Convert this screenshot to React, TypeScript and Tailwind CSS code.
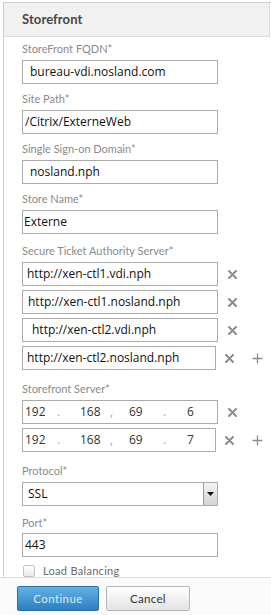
import React from 'react';

const labelCls = "h-[14px] leading-[14px] text-[11px] text-[#8a8a8a] font-['Lato',sans-serif]";
const inputCls = "w-[196px] h-[24px] border border-[#ababab] bg-white flex items-center text-[12px] text-[#111] font-['Open_Sans',sans-serif] whitespace-nowrap";

const RemoveIcon = () => (
  <div className="w-[28px] h-[24px] flex items-center justify-center">
    <svg width="9" height="9" viewBox="0 0 9 9">
      <path d="M1 1 L8 8 M8 1 L1 8" stroke="#8c8c8c" strokeWidth="2" strokeLinecap="round" />
    </svg>
  </div>
);

const AddIcon = () => (
  <div className="w-[28px] h-[24px] flex items-center justify-center">
    <svg width="11" height="11" viewBox="0 0 11 11">
      <path d="M5.5 0.5 V10.5 M0.5 5.5 H10.5" stroke="#8c8c8c" strokeWidth="1.3" />
    </svg>
  </div>
);

const TextField = ({ label, value, pad, className = '' }: { label: string; value: string; pad: string; className?: string }) => (
  <div className={className}>
    <div className={labelCls}>{label}</div>
    <div className={`mt-[4px] ${inputCls} ${pad}`}>{value}</div>
  </div>
);

const staServers = [
  { v: 'http://xen-ctl1.vdi.nph', pad: 'pl-[4px]' },
  { v: 'http://xen-ctl1.nosland.nph', pad: 'pl-[5px]' },
  { v: 'http://xen-ctl2.vdi.nph', pad: 'pl-[9px]' },
  { v: 'http://xen-ctl2.nosland.nph', pad: 'pl-[4px]' },
];

const IpField = ({ last }: { last: string }) => (
  <div className={`${inputCls} pl-[2px] text-[#333]`}>
    <span className="w-[32px]">192</span>
    <span className="w-[23px] text-[#aaa]">.</span>
    <span className="w-[30px]">168</span>
    <span className="w-[19px] text-[#aaa]">,</span>
    <span className="w-[34px]">69</span>
    <span className="w-[24px] text-[#aaa]">.</span>
    <span>{last}</span>
  </div>
);

export default function App() {
  return (
    <div className="w-[271px] h-[615px] bg-white overflow-hidden font-['Lato',sans-serif]">
      <div className="ml-[3px] mt-[2px] h-[575px] border-l border-t border-[#cfcfcf]">
        <div className="h-[34px] mr-[1px] bg-[#f1f1f1] border-b border-r border-[#d9d9d9] flex items-center pl-[18px]">
          <span className="text-[13px] font-bold text-[#474747] tracking-[0.1px]">Storefront</span>
        </div>

        <div className="pl-[18px] pt-[5px]">
          <TextField label="StoreFront FQDN*" value="bureau-vdi.nosland.com" pad="pl-[7px]" />
          <TextField className="mt-[8px]" label="Site Path*" value="/Citrix/ExterneWeb" pad="pl-[2px]" />
          <TextField className="mt-[8px]" label="Single Sign-on Domain*" value="nosland.nph" pad="pl-[7px]" />
          <TextField className="mt-[8px]" label="Store Name*" value="Externe" pad="pl-[1px]" />

          <div className="mt-[10px]">
            <div className={labelCls}>Secure Ticket Authority Server*</div>
            <div className="mt-[4px] flex flex-col gap-[4px]">
              {staServers.map((s, i) => (
                <div key={s.v} className="flex items-center">
                  <div className={`${inputCls} ${s.pad}`}>{s.v}</div>
                  <RemoveIcon />
                  {i === staServers.length - 1 && <AddIcon />}
                </div>
              ))}
            </div>
          </div>

          <div className="mt-[12px]">
            <div className={labelCls}>Storefront Server*</div>
            <div className="mt-[4px] flex flex-col gap-[4px]">
              <div className="flex items-center">
                <IpField last="6" />
                <RemoveIcon />
              </div>
              <div className="flex items-center">
                <IpField last="7" />
                <RemoveIcon />
                <AddIcon />
              </div>
            </div>
          </div>

          <div className="mt-[12px]">
            <div className={labelCls}>Protocol*</div>
            <div className={`mt-[4px] ${inputCls} pl-[5px] justify-between`}>
              <span>SSL</span>
              <div className="w-[14px] h-[22px] border-l border-[#9a9a9a] bg-gradient-to-b from-[#f4f4f4] to-[#d4d4d4] flex items-center justify-center">
                <svg width="7" height="4" viewBox="0 0 7 4">
                  <path d="M0 0 H7 L3.5 4 Z" fill="#111" />
                </svg>
              </div>
            </div>
          </div>

          <div className="mt-[10px]">
            <div className={labelCls}>Port*</div>
            <div className={`mt-[3px] ${inputCls} pl-[2px]`}>443</div>
          </div>

          <div className="mt-[8px] flex items-center">
            <div className="ml-[1px] w-[12px] h-[12px] rounded-[2px] border border-[#c2c2c2] bg-gradient-to-b from-[#ffffff] to-[#e9e9e9]" />
            <span className="ml-[8px] text-[11px] leading-[12px] text-[#6a6a6a] tracking-[0.3px]">Load Balancing</span>
          </div>
        </div>
      </div>

      <div className="border-t border-[#dedede] bg-[#fafafa] h-[38px] pt-[8px] pl-[17px] flex gap-[7px]">
        <button className="w-[82px] h-[25px] rounded-[2px] border border-[#2a6fa8] bg-gradient-to-b from-[#62b0e4] to-[#2d7fc1] text-[11.5px] text-[#d8ecfb] tracking-[0.4px]">
          Continue
        </button>
        <button className="w-[84px] h-[25px] rounded-[2px] border border-[#b5b5b5] bg-gradient-to-b from-[#ffffff] to-[#e3e3e3] text-[11.5px] text-[#333] tracking-[0.3px]">
          Cancel
        </button>
      </div>
    </div>
  );
}
